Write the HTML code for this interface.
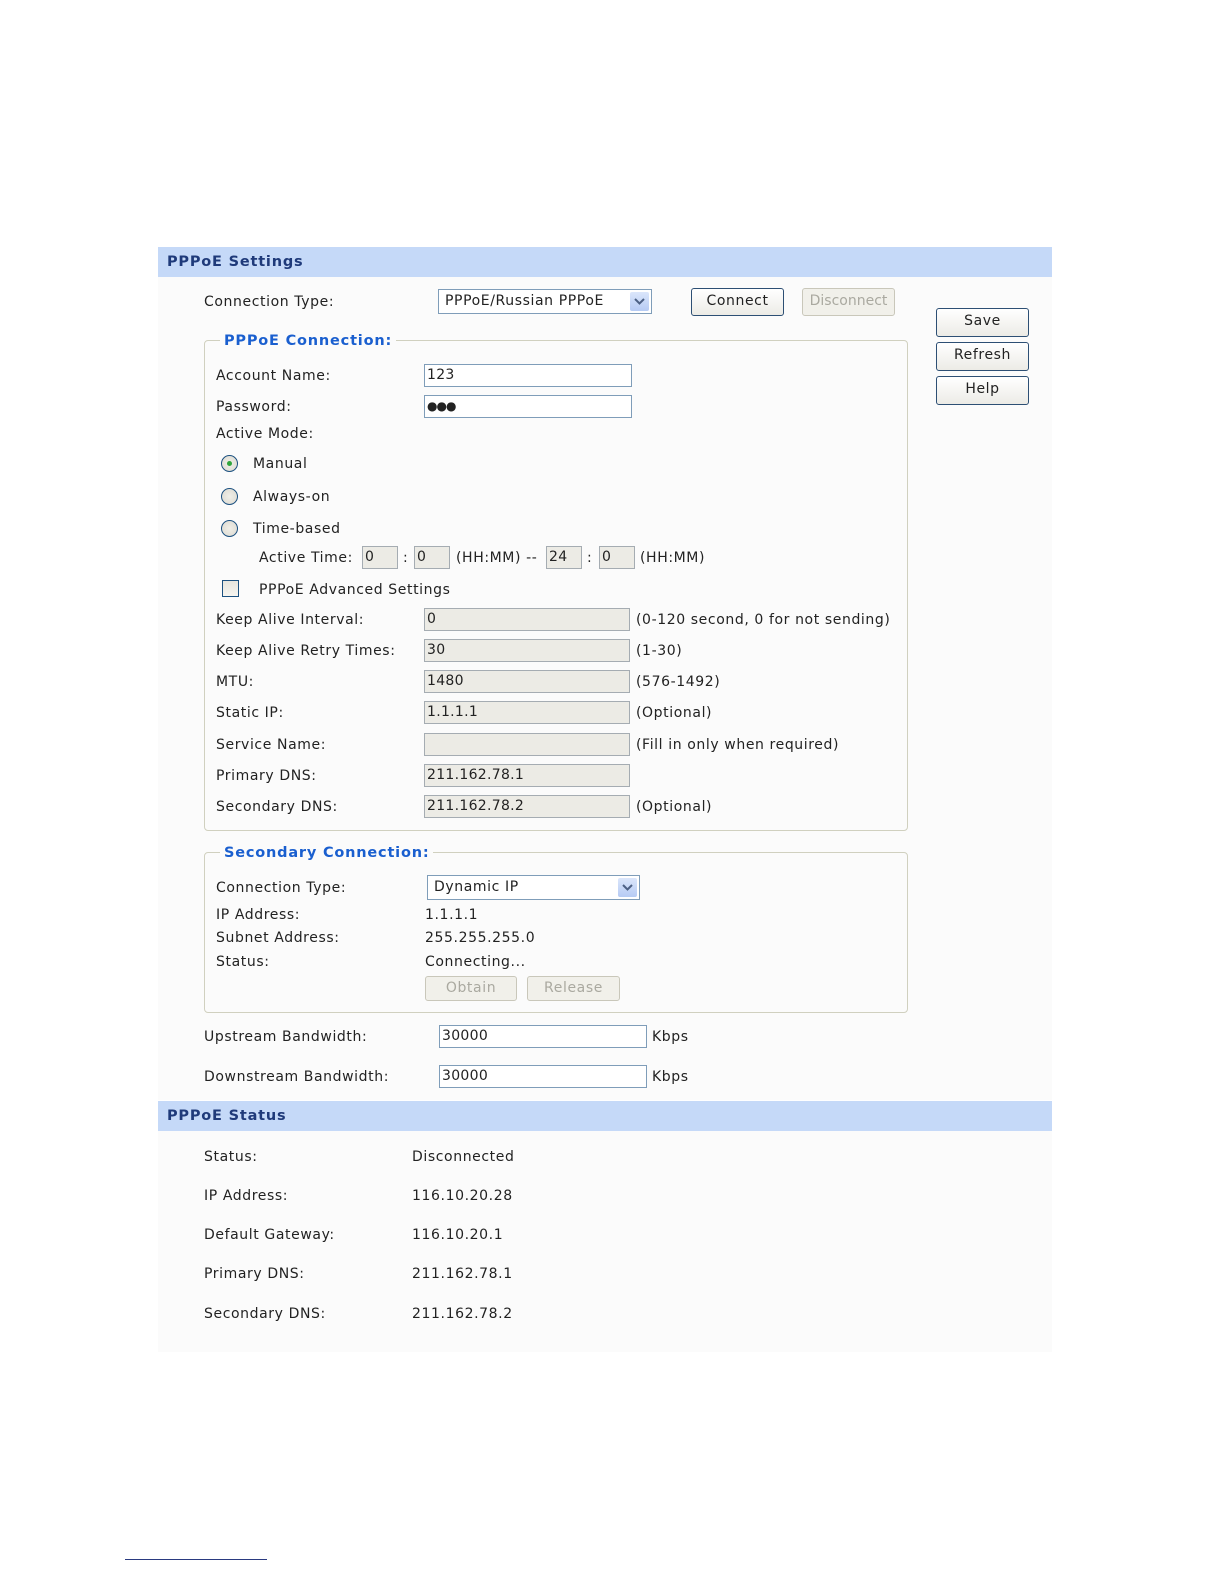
<!DOCTYPE html>
<html><head><meta charset="utf-8"><style>
*{margin:0;padding:0;box-sizing:border-box}
body{width:1224px;height:1584px;background:#fff;position:relative;font-family:"DejaVu Sans","Liberation Sans",sans-serif;font-size:14px;letter-spacing:0.6px;color:#222;overflow:hidden}
.a{position:absolute;white-space:nowrap;line-height:18px;top:0}
.hdr{position:absolute;left:158px;width:894px;height:30px;background:#c5d9f8;color:#1f3a7a;font-weight:bold;font-size:14.5px;line-height:30px;padding-left:9px;letter-spacing:0.8px}
.panel{position:absolute;left:158px;width:894px;background:#fbfbfb}
.in{position:absolute;border:1px solid #7f9db9;background:#fff;height:23px;line-height:21px;padding-left:2px;font-size:14px;white-space:nowrap;letter-spacing:0.3px}
.dis{background:#ecebe5;border-color:#a5acb2}
.btn{position:absolute;border:1px solid #2d4f74;border-radius:3px;background:linear-gradient(#fff,#ecebe6);text-align:center;line-height:25px;font-size:14px}
.bd{border-color:#c9c7ba;color:#aaa9a0;background:#f1f0ea}
.fs{position:absolute;border:1px solid #d0d0bf;border-radius:4px}
.lg{position:absolute;background:#fbfbfb;color:#1a5fcf;font-weight:bold;font-size:14.5px;padding:0 4px;line-height:18px;letter-spacing:0.8px}
.sel{position:absolute;border:1px solid #7f9db9;background:#fff;height:25px;line-height:23px;padding-left:6px}
.arr{position:absolute;right:2px;top:2px;width:19px;height:19px;background:linear-gradient(#dbe6fb,#b6cbf4);border-radius:2px}
.radio{position:absolute;width:17px;height:17px;border-radius:50%;border:1px solid #1c5180;background:radial-gradient(#f0efe8,#dcd9d0)}
</style></head><body>

<div class="hdr" style="top:247px">PPPoE Settings</div>
<div class="panel" style="top:277px;height:823px"></div>
<div class="hdr" style="top:1101px">PPPoE Status</div>
<div class="panel" style="top:1131px;height:221px"></div>

<div class="a" style="left:204px;top:293px">Connection Type:</div>
<div class="sel" style="left:438px;top:289px;width:214px">PPPoE/Russian PPPoE<div class="arr"><svg width="19" height="19"><path d="M5 7l4.5 4.5L14 7" stroke="#4d6185" stroke-width="2" fill="none"/></svg></div></div>
<div class="btn" style="left:691px;top:288px;width:93px;height:28px">Connect</div>
<div class="btn bd" style="left:802px;top:288px;width:93px;height:28px;letter-spacing:0">Disconnect</div>
<div class="btn" style="left:936px;top:308px;width:93px;height:29px">Save</div>
<div class="btn" style="left:936px;top:342px;width:93px;height:29px">Refresh</div>
<div class="btn" style="left:936px;top:376px;width:93px;height:29px">Help</div>

<div class="fs" style="left:204px;top:340px;width:704px;height:491px"></div>
<div class="lg" style="left:220px;top:332px">PPPoE Connection:</div>
<div class="a" style="left:216px;top:367px">Account Name:</div>
<div class="in" style="left:424px;top:364px;width:208px">123</div>
<div class="a" style="left:216px;top:398px">Password:</div>
<div class="in" style="left:424px;top:395px;width:208px;font-size:12px;letter-spacing:-1px">●●●</div>
<div class="a" style="left:216px;top:425px">Active Mode:</div>
<div class="radio" style="left:221px;top:455px"><div style="position:absolute;left:5px;top:5px;width:5px;height:5px;border-radius:50%;background:#2fa53b"></div></div>
<div class="a" style="left:253px;top:455px">Manual</div>
<div class="radio" style="left:221px;top:488px"></div>
<div class="a" style="left:253px;top:488px">Always-on</div>
<div class="radio" style="left:221px;top:520px"></div>
<div class="a" style="left:253px;top:520px">Time-based</div>
<div class="a" style="left:259px;top:549px">Active Time:</div>
<div class="in dis" style="left:362px;top:546px;width:36px">0</div>
<div class="a" style="left:403px;top:549px">:</div>
<div class="in dis" style="left:414px;top:546px;width:36px">0</div>
<div class="a" style="left:456px;top:549px">(HH:MM) --</div>
<div class="in dis" style="left:546px;top:546px;width:36px">24</div>
<div class="a" style="left:587px;top:549px">:</div>
<div class="in dis" style="left:599px;top:546px;width:36px">0</div>
<div class="a" style="left:640px;top:549px">(HH:MM)</div>
<div style="position:absolute;left:222px;top:580px;width:17px;height:17px;border:1px solid #1c5180;background:linear-gradient(#e6e5de,#f6f5f0)"></div>
<div class="a" style="left:259px;top:581px">PPPoE Advanced Settings</div>

<div class="a" style="left:216px;top:611px">Keep Alive Interval:</div>
<div class="in dis" style="left:424px;top:608px;width:206px">0</div>
<div class="a" style="left:636px;top:611px">(0-120 second, 0 for not sending)</div>
<div class="a" style="left:216px;top:642px">Keep Alive Retry Times:</div>
<div class="in dis" style="left:424px;top:639px;width:206px">30</div>
<div class="a" style="left:636px;top:642px">(1-30)</div>
<div class="a" style="left:216px;top:673px">MTU:</div>
<div class="in dis" style="left:424px;top:670px;width:206px">1480</div>
<div class="a" style="left:636px;top:673px">(576-1492)</div>
<div class="a" style="left:216px;top:704px">Static IP:</div>
<div class="in dis" style="left:424px;top:701px;width:206px">1.1.1.1</div>
<div class="a" style="left:636px;top:704px">(Optional)</div>
<div class="a" style="left:216px;top:736px">Service Name:</div>
<div class="in dis" style="left:424px;top:733px;width:206px"></div>
<div class="a" style="left:636px;top:736px">(Fill in only when required)</div>
<div class="a" style="left:216px;top:767px">Primary DNS:</div>
<div class="in dis" style="left:424px;top:764px;width:206px">211.162.78.1</div>
<div class="a" style="left:216px;top:798px">Secondary DNS:</div>
<div class="in dis" style="left:424px;top:795px;width:206px">211.162.78.2</div>
<div class="a" style="left:636px;top:798px">(Optional)</div>

<div class="fs" style="left:204px;top:852px;width:704px;height:161px"></div>
<div class="lg" style="left:220px;top:844px">Secondary Connection:</div>
<div class="a" style="left:216px;top:879px">Connection Type:</div>
<div class="sel" style="left:427px;top:875px;width:213px">Dynamic IP<div class="arr"><svg width="19" height="19"><path d="M5 7l4.5 4.5L14 7" stroke="#4d6185" stroke-width="2" fill="none"/></svg></div></div>
<div class="a" style="left:216px;top:906px">IP Address:</div>
<div class="a" style="left:425px;top:906px">1.1.1.1</div>
<div class="a" style="left:216px;top:929px">Subnet Address:</div>
<div class="a" style="left:425px;top:929px">255.255.255.0</div>
<div class="a" style="left:216px;top:953px">Status:</div>
<div class="a" style="left:425px;top:953px">Connecting...</div>
<div class="btn bd" style="left:425px;top:976px;width:92px;height:25px;line-height:23px">Obtain</div>
<div class="btn bd" style="left:527px;top:976px;width:93px;height:25px;line-height:23px">Release</div>

<div class="a" style="left:204px;top:1028px">Upstream Bandwidth:</div>
<div class="in" style="left:439px;top:1025px;width:208px">30000</div>
<div class="a" style="left:652px;top:1028px">Kbps</div>
<div class="a" style="left:204px;top:1068px">Downstream Bandwidth:</div>
<div class="in" style="left:439px;top:1065px;width:208px">30000</div>
<div class="a" style="left:652px;top:1068px">Kbps</div>

<div class="a" style="left:204px;top:1148px">Status:</div><div class="a" style="left:412px;top:1148px">Disconnected</div>
<div class="a" style="left:204px;top:1187px">IP Address:</div><div class="a" style="left:412px;top:1187px">116.10.20.28</div>
<div class="a" style="left:204px;top:1226px">Default Gateway:</div><div class="a" style="left:412px;top:1226px">116.10.20.1</div>
<div class="a" style="left:204px;top:1265px">Primary DNS:</div><div class="a" style="left:412px;top:1265px">211.162.78.1</div>
<div class="a" style="left:204px;top:1305px">Secondary DNS:</div><div class="a" style="left:412px;top:1305px">211.162.78.2</div>

<div style="position:absolute;left:125px;top:1559px;width:142px;height:1px;background:#2a3a80"></div>
</body></html>
